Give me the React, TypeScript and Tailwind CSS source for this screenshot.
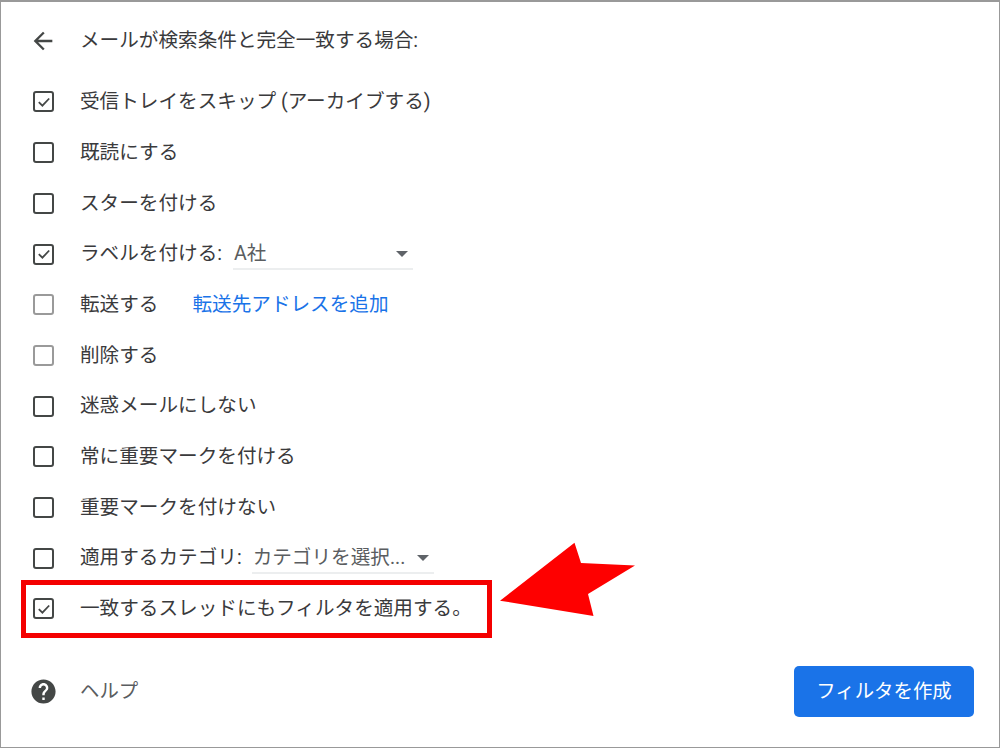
const font = "font-['Roboto','Noto_Sans_CJK_JP',sans-serif]";

function Checkbox({ checked = false, muted = false }: { checked?: boolean; muted?: boolean }) {
  return (
    <span
      className={`flex h-[21px] w-[21px] shrink-0 items-center justify-center rounded-[3px] border-[2.5px] ${
        muted ? "border-[#9a9a9a]" : "border-[#444746]"
      }`}
    >
      {checked && (
        <svg viewBox="0 0 16 16" className="h-[16px] w-[16px]" fill="none" stroke="#444746" strokeWidth="1.8">
          <path d="M2.8 8.1l3.6 3.6 6.8-7.2" />
        </svg>
      )}
    </span>
  );
}

function Select({ value, width, gap }: { value: string; width: string; gap: string }) {
  return (
    <div className={`mt-[2px] flex h-[30px] items-center justify-between border-b-2 border-[#eceeef] pl-px pr-[5px] ${width} ${gap}`}>
      <span className="text-[#5a5d60]">{value}</span>
      <span className="h-0 w-0 border-x-[6px] border-t-[6px] border-x-transparent border-t-[#5f6368]" />
    </div>
  );
}

function Row({ checked, muted, children }: { checked?: boolean; muted?: boolean; children: React.ReactNode }) {
  return (
    <div className="flex h-[50.7px] items-center pl-[32px]">
      <Checkbox checked={checked} muted={muted} />
      <div className="ml-[26px] flex items-center">{children}</div>
    </div>
  );
}

export default function App() {
  return (
    <div
      className={`relative flex h-[748px] w-[1000px] flex-col border border-t-2 border-[#999999] bg-white text-[19.63px] leading-none text-[#3a3a3c] ${font}`}
    >
      {/* Header */}
      <div className="mt-[15px] flex h-[48px] items-center pl-[28px]">
        <svg viewBox="0 0 24 24" className="h-[28px] w-[28px]" fill="#444746">
          <path d="M20 11H7.83l5.59-5.59L12 4l-8 8 8 8 1.41-1.41L7.83 13H20v-2z" />
        </svg>
        <span className="ml-[23px]">メールが検索条件と完全一致する場合:</span>
      </div>

      {/* Options */}
      <div className="mt-[11.65px] flex flex-col">
        <Row checked>受信トレイをスキップ (アーカイブする)</Row>
        <Row>既読にする</Row>
        <Row>スターを付ける</Row>
        <Row checked>
          <span>ラベルを付ける:</span>
          <Select value="A社" width="w-[180px]" gap="ml-[11px]" />
        </Row>
        <Row muted>
          <span>転送する</span>
          <span className="ml-[34px] text-[#1a73e8]">転送先アドレスを追加</span>
        </Row>
        <Row muted>削除する</Row>
        <Row>迷惑メールにしない</Row>
        <Row>常に重要マークを付ける</Row>
        <Row>重要マークを付けない</Row>
        <Row>
          <span>適用するカテゴリ:</span>
          <Select value="カテゴリを選択..." width="w-[182px]" gap="ml-[10px]" />
        </Row>
        <Row checked>一致するスレッドにもフィルタを適用する。</Row>
      </div>

      {/* Footer */}
      <div className="mt-[31.65px] flex items-center justify-between pl-[28px] pr-[25px]">
        <div className="flex items-center">
          <svg viewBox="0 0 24 24" className="h-[29px] w-[29px]" fill="#444746">
            <path d="M12 2C6.48 2 2 6.48 2 12s4.48 10 10 10 10-4.48 10-10S17.52 2 12 2zm1 17h-2v-2h2v2zm2.07-7.75l-.9.92C13.45 12.9 13 13.5 13 15h-2v-.5c0-1.1.45-2.1 1.17-2.83l1.24-1.26c.37-.36.59-.86.59-1.41 0-1.1-.9-2-2-2s-2 .9-2 2H8c0-2.21 1.79-4 4-4s4 1.79 4 4c0 .88-.36 1.68-.93 2.25z" />
          </svg>
          <span className="ml-[22px] text-[19.4px] text-[#5a5d60]">ヘルプ</span>
        </div>
        <button className="flex h-[51px] w-[180px] items-center justify-center rounded-[5px] bg-[#1a73e8] text-[19.4px] text-white">
          フィルタを作成
        </button>
      </div>

      {/* Annotation */}
      <div className="absolute left-[20px] top-[578px] h-[58px] w-[471px] border-[5px] border-[#f40000]" />
      <svg className="absolute left-[-1px] top-[-2px] h-[748px] w-[1000px]" viewBox="0 0 1000 748" fill="#fe0000">
        <polygon points="500,600.7 574.5,542.7 581,563 635,565.5 588,594 593.5,616" />
      </svg>
    </div>
  );
}
